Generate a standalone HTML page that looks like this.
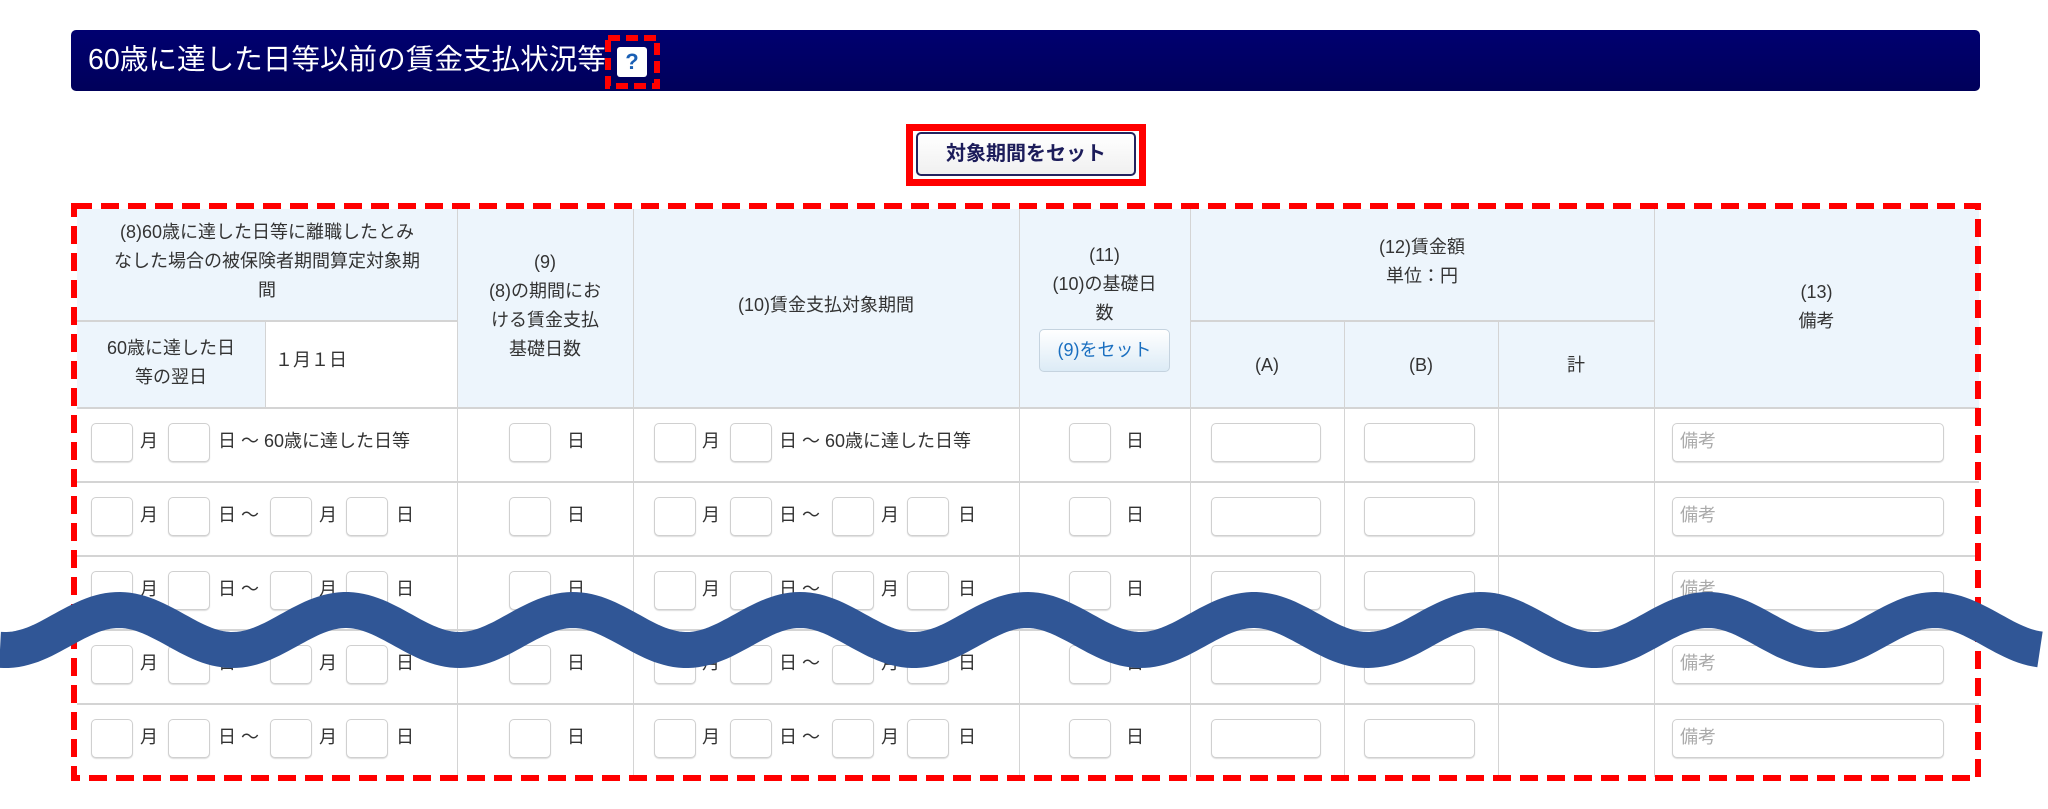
<!DOCTYPE html>
<html><head><meta charset="utf-8"><style>
*{margin:0;padding:0;box-sizing:border-box}
body{width:2048px;height:809px;background:#fff;position:relative;overflow:hidden;font-family:"Liberation Sans","Noto Sans CJK JP",sans-serif;color:#333}
.a{position:absolute}
.bar{left:71px;top:30px;width:1909px;height:61px;background:linear-gradient(#000070,#00005a);border-radius:5px}
.title{left:88px;top:41px;font-size:28.6px;color:#fff;line-height:38px;white-space:nowrap}
.hl{background:#d4d4d4;height:2px}
.vl{background:#d4d4d4;width:1px}
.t{font-size:18px;line-height:29px;text-align:center;white-space:nowrap}
.in{position:absolute;border:1px solid #d0d0d0;border-radius:5px;background:#fff;height:39px;box-shadow:0 1px 1px #ddd}
.s{position:absolute;font-size:18px;line-height:24px;white-space:nowrap}
</style></head><body>
<div class="a bar"></div>
<div class="a title">60歳に達した日等以前の賃金支払状況等</div>
<div class="a" style="left:617px;top:47px;width:30px;height:30px;background:#fff;border-radius:3px;color:#1a5fb4;font-weight:bold;font-size:22px;text-align:center;line-height:30px">?</div>
<svg class="a" style="left:605px;top:35px" width="55" height="54"><rect x="3" y="3" width="49" height="48" fill="none" stroke="#f00" stroke-width="6" stroke-dasharray="12 6"/></svg>

<div class="a" style="left:906px;top:124px;width:240px;height:62px;border:7px solid #f00"></div>
<div class="a" style="left:916px;top:132px;width:220px;height:44px;border:2px solid #23235f;border-radius:5px;background:linear-gradient(#fff,#f0f0f0);font-weight:bold;font-size:20px;color:#1c1c5a;text-align:center;line-height:40px">対象期間をセット</div>

<div class="a" style="left:77px;top:209px;width:1902px;height:199px;background:#edf5fc"></div>
<div class="a" style="left:265px;top:322px;width:192px;height:86px;background:#fff"></div>
<div class="a hl" style="left:77px;top:320px;width:380px"></div>
<div class="a hl" style="left:1190px;top:320px;width:464px"></div>
<div class="a hl" style="left:77px;top:407px;width:1902px"></div>
<div class="a hl" style="left:77px;top:481px;width:1902px"></div>
<div class="a hl" style="left:77px;top:555px;width:1902px"></div>
<div class="a hl" style="left:77px;top:629px;width:1902px"></div>
<div class="a hl" style="left:77px;top:703px;width:1902px"></div>
<div class="a vl" style="left:265px;top:321px;height:87px"></div>
<div class="a vl" style="left:457px;top:209px;height:568px"></div>
<div class="a vl" style="left:633px;top:209px;height:568px"></div>
<div class="a vl" style="left:1019px;top:209px;height:568px"></div>
<div class="a vl" style="left:1190px;top:209px;height:568px"></div>
<div class="a vl" style="left:1344px;top:321px;height:456px"></div>
<div class="a vl" style="left:1498px;top:321px;height:456px"></div>
<div class="a vl" style="left:1654px;top:209px;height:568px"></div>

<div class="a t" style="left:77px;width:380px;top:218px">(8)60歳に達した日等に離職したとみ<br>なした場合の被保険者期間算定対象期<br>間</div>
<div class="a t" style="left:77px;width:188px;top:334px">60歳に達した日<br>等の翌日</div>
<div class="a t" style="left:275px;top:346px">１月１日</div>
<div class="a t" style="left:457px;width:176px;top:248px">(9)<br>(8)の期間にお<br>ける賃金支払<br>基礎日数</div>
<div class="a t" style="left:633px;width:386px;top:291px">(10)賃金支払対象期間</div>
<div class="a t" style="left:1019px;width:171px;top:241px">(11)<br>(10)の基礎日<br>数</div>
<div class="a" style="left:1039px;top:329px;width:131px;height:43px;border:1px solid #c5d3df;border-radius:5px;background:linear-gradient(#fff,#dcebf6);color:#1a6fc0;font-size:18px;text-align:center;line-height:41px">(9)をセット</div>
<div class="a t" style="left:1190px;width:464px;top:233px">(12)賃金額<br>単位：円</div>
<div class="a t" style="left:1190px;width:154px;top:351px">(A)</div>
<div class="a t" style="left:1344px;width:154px;top:351px">(B)</div>
<div class="a t" style="left:1498px;width:156px;top:351px">計</div>
<div class="a t" style="left:1654px;width:325px;top:278px">(13)<br>備考</div>

<div id="rows"></div>
<script>
var h='';
for(var r=0;r<5;r++){
 var y=423+r*74, ty=y+6;
 function inp(x,w){h+='<div class="in" style="left:'+x+'px;top:'+y+'px;width:'+w+'px"></div>';}
 function s(x,t,st){h+='<span class="s" style="left:'+x+'px;top:'+ty+'px;'+(st||'')+'">'+t+'</span>';}
 inp(91,42);s(140,'月');inp(168,42);
 if(r==0){s(218,'日 ～ 60歳に達した日等');}
 else{s(218,'日 ～');inp(270,42);s(319,'月');inp(346,42);s(396,'日');}
 inp(509,42);s(567,'日');
 inp(654,42);s(702,'月');inp(730,42);
 if(r==0){s(779,'日 ～ 60歳に達した日等');}
 else{s(779,'日 ～');inp(832,42);s(881,'月');inp(907,42);s(958,'日');}
 inp(1069,42);s(1126,'日');
 inp(1211,110);inp(1364,111);
 inp(1672,272);s(1680,'備考','color:#aaa');
}
document.getElementById('rows').innerHTML=h;
</script>

<svg class="a" style="left:0;top:0" width="2048" height="809">
<rect x="74" y="206" width="1904" height="572" fill="none" stroke="#f00" stroke-width="6" stroke-dasharray="18 9"/>
<path id="w" fill="none" stroke="#305696" stroke-width="36" d=""/>
</svg>
<script>
var d='';for(var x=0;x<=2040;x+=4){var y=630-20*Math.cos((x-119)*2*Math.PI/227);d+=(x?'L':'M')+x+' '+y.toFixed(1);}
document.getElementById('w').setAttribute('d',d);
</script>
</body></html>
